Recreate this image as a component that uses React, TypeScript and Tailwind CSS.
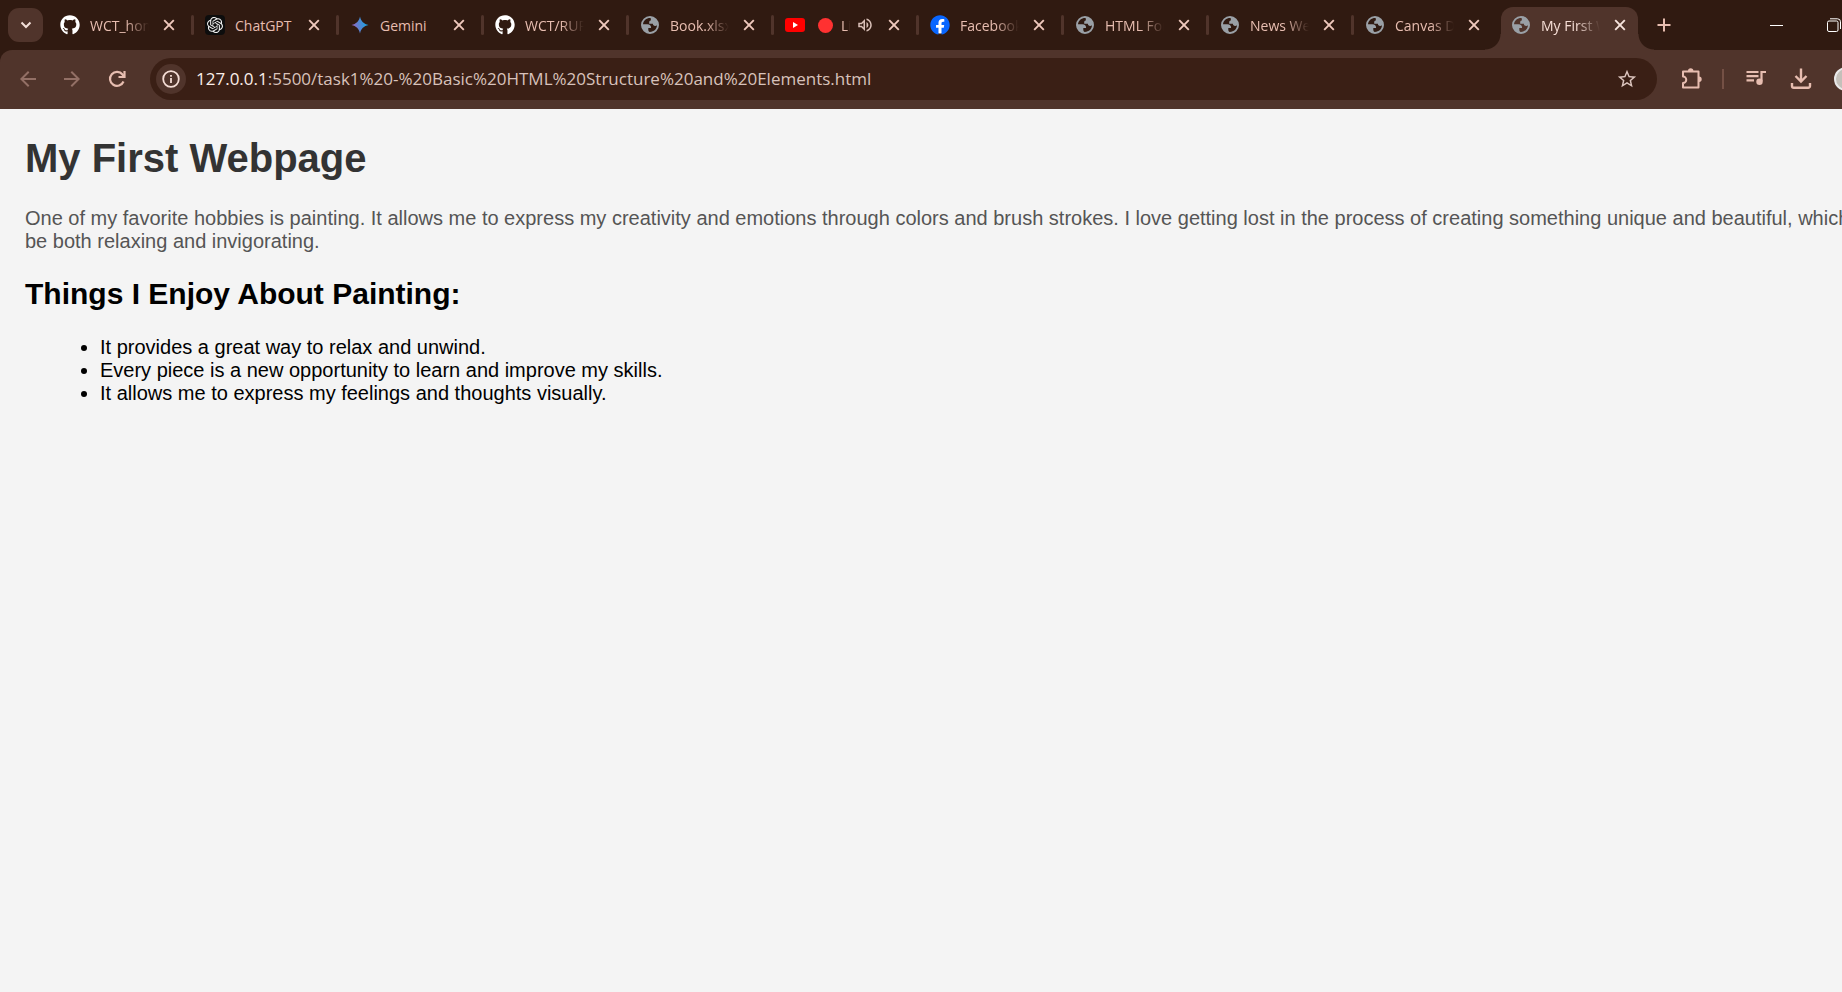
import type { ReactNode } from "react";
import { FaGithub, FaFacebook } from "react-icons/fa";
import { SiOpenai } from "react-icons/si";
import { MdArrowBack, MdArrowForward, MdOutlineVolumeUp, MdStarBorder } from "react-icons/md";

function Globe() {
  return (
    <svg viewBox="0 0 20 20" className="size-5" aria-hidden="true">
      <path
        fillRule="evenodd"
        d="M10 1a9 9 0 1 0 0 18 9 9 0 0 0 0-18ZM10.600 3C6.500 2.800 3.300 5.600 3 9.200H7.400C9.900 9.200 11.100 10.400 11.100 12.900H8.300V14.800C8.300 16 8.800 16.700 9.800 17 13.900 16.900 16.900 13.800 17 10.300 16.500 10.700 16 10.900 15.200 10.900 13.700 10.900 12.900 10.200 12.900 8.800H9.200V7.200C9.200 6 9.800 5.500 11 5.500Z"
        fill="#9aa0a6"
      />
    </svg>
  );
}

function Gemini() {
  return (
    <svg viewBox="0 0 20 20" className="size-5" aria-hidden="true">
      <defs>
        <linearGradient id="gem" x1="0" x2="1" y1="0.600" y2="0.400">
          <stop offset="0.100" stopColor="#9168c0" />
          <stop offset="0.450" stopColor="#5684d1" />
          <stop offset="0.900" stopColor="#1ba1e3" />
        </linearGradient>
      </defs>
      <path d="M10 1.500C11 6.200 13.800 9 18.500 10 13.800 11 11 13.800 10 18.500 9 13.800 6.200 11 1.500 10 6.200 9 9 6.200 10 1.500Z" fill="url(#gem)" />
    </svg>
  );
}

function YouTube() {
  return (
    <svg viewBox="0 0 20 20" className="size-5" aria-hidden="true">
      <rect y="3" width="20" height="14" rx="3" fill="#f00" />
      <path d="M8 7v6l5-3z" fill="#fff" />
    </svg>
  );
}

function ChatGpt() {
  return (
    <span className="flex size-5 items-center justify-center rounded bg-[#0d0d0d]">
      <SiOpenai className="size-4 text-[#f2f2f2]" />
    </span>
  );
}

function Facebook() {
  return (
    <span className="block size-5 rounded-full bg-[radial-gradient(circle,white_8px,transparent_9px)]">
      <FaFacebook className="size-5 text-[#0866ff]" />
    </span>
  );
}

function Cross() {
  return (
    <svg viewBox="0 0 16 16" className="size-4" stroke="currentColor" strokeWidth="1.900" aria-hidden="true">
      <path d="M3.200 3.200l9.600 9.600M12.800 3.200l-9.600 9.600" />
    </svg>
  );
}

type Tab = { title: string; icon: ReactNode; audio?: boolean };

const github = <FaGithub className="size-5 text-white" />;

const tabs: Tab[] = [
  { title: "WCT_homework", icon: github },
  { title: "ChatGPT", icon: <ChatGpt /> },
  { title: "Gemini", icon: <Gemini /> },
  { title: "WCT/RUPP", icon: github },
  { title: "Book.xlsx", icon: <Globe /> },
  { title: "Live", icon: <YouTube />, audio: true },
  { title: "Facebook", icon: <Facebook /> },
  { title: "HTML Form", icon: <Globe /> },
  { title: "News Website", icon: <Globe /> },
  { title: "Canvas Demo", icon: <Globe /> },
];

const faded = "min-w-0 flex-1 overflow-hidden whitespace-nowrap [mask-image:linear-gradient(to_right,black_60%,transparent)]";

function TabBody({ tab, close }: { tab: Tab; close: string }) {
  return (
    <>
      <span className="mr-2.5 shrink-0">{tab.icon}</span>
      {tab.audio && <span className="mr-2 ml-[3px] size-[15px] shrink-0 rounded-full bg-[#ff3131]" />}
      <span className={tab.title.length > 7 || tab.audio ? `${faded} pt-0.5` : "min-w-0 flex-1 pt-0.5 whitespace-nowrap"}>
        {tab.title}
      </span>
      {tab.audio && <MdOutlineVolumeUp className="ml-1.5 size-[18px] shrink-0 text-[#d9c0b8]" />}
      <button type="button" aria-label={`Close ${tab.title}`} className={`ml-2.5 flex size-5 shrink-0 items-center justify-center ${close}`}>
        <Cross />
      </button>
    </>
  );
}

function TabStrip() {
  return (
    <div className="flex h-[50px] bg-[#301a11] pl-2 text-sm text-[#e7bdb0]">
      <button type="button" aria-label="Search tabs" className="mt-2 mr-1.5 flex h-[34px] w-[35px] items-center justify-center rounded-[11px] bg-[#50342b] text-[#f3dfd8]">
        <svg viewBox="0 0 12 12" className="size-3" fill="none" stroke="currentColor" strokeWidth="2" aria-hidden="true">
          <path d="M1.500 3.500 6 8l4.500-4.500" />
        </svg>
      </button>
      {tabs.map((tab, i) => (
        <div key={tab.title} className="flex w-[145px] shrink-0 items-center pl-[11px]">
          <TabBody tab={tab} close="text-[#f0c9bd]" />
          <span className={i === tabs.length - 1 ? "ml-3 h-5 w-[3px]" : "ml-3 h-5 w-[3px] rounded-full bg-[#50342b]"} />
        </div>
      ))}
      <div className="relative mt-[7px] ml-0.5 flex w-[137px] shrink-0 items-center rounded-t-xl bg-[#50342b] pr-2 pb-[7px] pl-2.5 text-[#f5ddd5]">
        <span className="absolute bottom-0 -left-4 size-4 bg-[radial-gradient(circle_at_0_0,#301a11_15px,#50342b_16px)]" />
        <span className="absolute -right-4 bottom-0 size-4 bg-[radial-gradient(circle_at_100%_0,#301a11_15px,#50342b_16px)]" />
        <TabBody tab={{ title: "My First Webpage", icon: <Globe /> }} close="text-[#f7e4dd]" />
      </div>
      <button type="button" aria-label="New tab" className="ml-4 flex size-5 items-center justify-center self-center">
        <svg viewBox="0 0 14 14" className="size-3.5" stroke="currentColor" strokeWidth="2" aria-hidden="true">
          <path d="M7 0.500v13M0.500 7h13" />
        </svg>
      </button>
      <div className="ml-auto flex text-white">
        <button type="button" aria-label="Minimize" className="flex w-[57px] items-center justify-center">
          <span className="h-px w-[13px] bg-white" />
        </button>
        <button type="button" aria-label="Restore" className="flex w-[58px] items-center justify-center">
          <svg viewBox="0 0 14 14" className="size-3.5" fill="none" stroke="currentColor" aria-hidden="true">
            <rect x="0.500" y="3" width="10.500" height="10.500" rx="1.500" />
            <path d="M3 .8h7.500a3 3 0 0 1 3 3V11" />
          </svg>
        </button>
        <button type="button" aria-label="Close window" className="flex w-[57px] items-center justify-center">
          <Cross />
        </button>
      </div>
    </div>
  );
}

function Toolbar() {
  return (
    <div className="bg-[#301a11]">
      <div className="flex h-[59px] items-center rounded-tl-xl bg-[#50342b] pr-2 pb-0.5 pl-4 text-[#e7bdb0]">
        <button type="button" aria-label="Back" className="mr-5 text-[#937066]"><MdArrowBack className="size-6" /></button>
        <button type="button" aria-label="Forward" className="mr-5 text-[#937066]"><MdArrowForward className="size-6" /></button>
        <button type="button" aria-label="Reload" className="mr-5">
          <svg viewBox="0 0 24 24" className="size-6" fill="none" stroke="currentColor" strokeWidth="2.200" aria-hidden="true">
            <path d="M19.500 14.500A7 7 0 1 1 18.500 7.500L20 9.500" />
            <path d="M20.500 4v6h-6" />
          </svg>
        </button>
        <div className="ml-0.5 flex h-[42px] min-w-0 flex-1 items-center rounded-full bg-[#3a1f15] pr-[19px] pl-1.5">
          <button type="button" aria-label="Site information" className="flex size-[30px] shrink-0 items-center justify-center rounded-full bg-[#50342b] text-[#f5ddd5]">
            <svg viewBox="0 0 18 18" className="size-[18px]" fill="none" stroke="currentColor" strokeWidth="1.800" aria-hidden="true">
              <circle cx="9" cy="9" r="7.800" />
              <path d="M9 8v5M9 5v1.800" />
            </svg>
          </button>
          <div className="ml-2.5 flex-1 text-[17px] whitespace-nowrap text-[#d8c2bb]">
            <span className="text-[#fbeee9]">127.0.0.1</span>:5500/task1%20-%20Basic%20HTML%20Structure%20and%20Elements.html
          </div>
          <button type="button" aria-label="Bookmark this page" className="text-[#dcc5be]"><MdStarBorder className="size-[22px]" /></button>
        </div>
        <button type="button" aria-label="Extensions" className="ml-[22px]">
          <svg viewBox="0 0 24 24" className="size-6" aria-hidden="true">
            <path d="M4 4.500h15.500v16H4v-4.500a3.200 3.200 0 0 0 0-6.500z" fill="none" stroke="currentColor" strokeWidth="2" strokeLinejoin="round" />
            <path d="M9 4a2.700 2.700 0 0 1 5.400 0zM20 9.500a2.700 2.700 0 0 1 0 5.400z" fill="currentColor" />
          </svg>
        </button>
        <span className="ml-[19px] h-5 w-0.5 bg-[#745045]" />
        <button type="button" aria-label="Media controls" className="ml-5">
          <svg viewBox="0 0 24 24" className="size-6" fill="none" stroke="currentColor" strokeWidth="2.200" aria-hidden="true">
            <path d="M2.500 5h12M2.500 9.200h12M2.500 13.400h7.500M17.500 14.500V5H22" />
            <circle cx="15.500" cy="14.800" r="3.200" fill="currentColor" stroke="none" />
          </svg>
        </button>
        <button type="button" aria-label="Downloads" className="ml-[21px]">
          <svg viewBox="0 0 24 24" className="size-6" fill="none" stroke="currentColor" strokeWidth="2.400" aria-hidden="true">
            <path d="M12 1.500v13M6.500 9 12 14.500 17.500 9M3 16v3a1.800 1.800 0 0 0 1.800 1.800h14.400A1.800 1.800 0 0 0 21 19v-3" />
          </svg>
        </button>
        <button type="button" aria-label="Profile" className="ml-[21px] size-6 rounded-full border-2 border-[#e9e9e9] bg-[#c4c0ba]" />
        <button type="button" aria-label="Menu" className="ml-[22px] w-8">⋮</button>
      </div>
    </div>
  );
}

export default function App() {
  return (
    <div className="min-h-screen overflow-hidden bg-[#f4f4f4]">
      <div className="w-[calc(100%+78px)]">
        <header className="font-['Open_Sans',sans-serif]">
          <TabStrip />
          <Toolbar />
        </header>
        <main className="px-[25px] pt-[26px] font-['Liberation_Sans',Arial,sans-serif] text-[20px] leading-[23px] text-black">
          <h1 className="text-[40px] leading-[46px] font-bold text-[#333]">My First Webpage</h1>
          <p className="mt-[26px] text-[#555]">
            One of my favorite hobbies is painting. It allows me to express my creativity and emotions through colors and brush strokes. I love getting lost in the process of creating something unique and beautiful, which can be both relaxing and invigorating.
          </p>
          <h2 className="mt-6 text-[30px] leading-[34px] font-bold">Things I Enjoy About Painting:</h2>
          <ul className="mt-[25px] list-disc pl-[75px]">
            <li>It provides a great way to relax and unwind.</li>
            <li>Every piece is a new opportunity to learn and improve my skills.</li>
            <li>It allows me to express my feelings and thoughts visually.</li>
          </ul>
        </main>
      </div>
    </div>
  );
}
